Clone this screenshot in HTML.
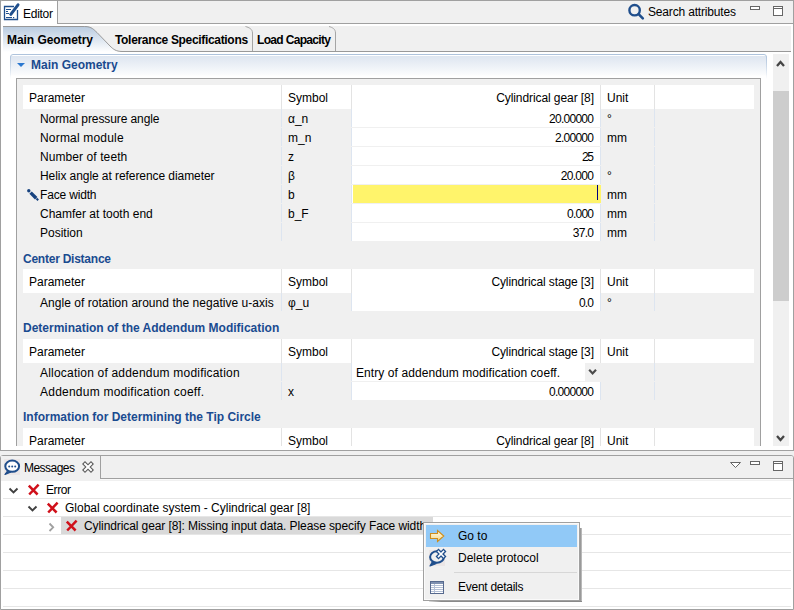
<!DOCTYPE html>
<html><head><meta charset="utf-8"><style>
html,body{margin:0;padding:0;width:794px;height:610px;overflow:hidden;background:#f0f0f0}
body>div,body>svg{position:absolute}
.t{font-family:"Liberation Sans",sans-serif;font-size:12px;line-height:14px;color:#000;white-space:nowrap}
</style></head><body>
<div style="left:0px;top:0px;width:794px;height:451px;background:#fff"></div>
<div style="left:57px;top:0px;width:737px;height:24px;background:#f0f0f0;border-top:1px solid #a0a0a0;border-bottom:1px solid #a0a0a0;box-sizing:border-box"></div>
<div style="left:0px;top:0px;width:58px;height:24px;background:#fff;border:1px solid #a0a0a0;border-bottom:none;box-sizing:border-box;border-top-left-radius:2px"></div>
<div style="left:0px;top:0px;width:1px;height:451px;background:#a0a0a0"></div>
<div style="left:793px;top:0px;width:1px;height:451px;background:#a0a0a0"></div>
<div style="left:0px;top:450px;width:794px;height:1px;background:#a0a0a0"></div>
<div class="t" style="left:23px;top:7px;;letter-spacing:-0.269px">Editor</div>
<div class="t" style="left:648px;top:5px;;letter-spacing:-0.168px">Search attributes</div>
<svg style="left:0px;top:0px" width="794" height="24" viewBox="0 0 794 24"><g fill="none" stroke="#1f4e8c" stroke-width="1.3"><path d="M14,6.5 L4.5,6.5 L4.5,19.5 L17.5,19.5 L17.5,10"/></g>
<g stroke="#1f4e8c" stroke-width="1.2"><path d="M6,9.5 H11 M6,11.5 H8 M6,13.5 H9 M6,17.5 H12"/></g>
<rect x="13" y="17" width="1.2" height="1.2" fill="#1f4e8c"/>
<path d="M18,4.8 L10.8,14.3" stroke="#1f4e8c" stroke-width="3" stroke-linecap="round"/>
<circle cx="634.6" cy="10.2" r="5.2" fill="none" stroke="#1f4e8c" stroke-width="2.4"/>
<path d="M638.6,14.2 L642.8,18.4" stroke="#1f4e8c" stroke-width="2.6" stroke-linecap="round"/>
<rect x="750.5" y="6.5" width="9" height="3" fill="#fff" stroke="#666" stroke-width="1"/>
<rect x="773.5" y="6.5" width="9" height="9" fill="#fff" stroke="#666" stroke-width="1"/>
<path d="M773.5,8.5 H782.5" stroke="#666" stroke-width="1"/></svg>
<div style="left:3px;top:26px;width:788px;height:25px;background:#f0f0f0"></div>
<svg style="left:0px;top:20px" width="794" height="40" viewBox="0 20 794 40"><defs><linearGradient id="tg" x1="0" y1="0" x2="0" y2="1"><stop offset="0" stop-color="#b7cadf"/><stop offset="1" stop-color="#ffffff"/></linearGradient></defs>
<path d="M3,26 L84.5,26 C92,26 94,30 97,32.5 L110,46 C113,49 116,52 122,52 L3,52 Z" fill="url(#tg)"/>
<path d="M3,26.5 L84.5,26.5 C92,26.5 94,30 97,32.5 L110,46 C113,49 116,51.5 122,51.5 L791,51.5" fill="none" stroke="#999" stroke-width="1"/>
<path d="M245.5,26.5 C249,27.5 252.5,29 252.5,33 L252.5,51" fill="none" stroke="#a5a5a5" stroke-width="1"/>
<path d="M329,26.5 C332.5,27.5 335.5,29 335.5,33 L335.5,51" fill="none" stroke="#a5a5a5" stroke-width="1"/></svg>
<div class="t" style="left:7px;top:33px;font-weight:bold;letter-spacing:-0.056px">Main Geometry</div>
<div class="t" style="left:115px;top:33px;font-weight:bold;letter-spacing:-0.323px">Tolerance Specifications</div>
<div class="t" style="left:257px;top:33px;font-weight:bold;letter-spacing:-0.667px">Load Capacity</div>
<div style="left:10px;top:54px;width:757px;height:25px;background:linear-gradient(#fff 0,#fff 2px,#dde5f0 2px,#fbfcfd 21px,#fff 22px);border-radius:3px 3px 0 0"></div>
<svg style="left:0px;top:50px" width="794" height="32" viewBox="0 50 794 32"><defs><linearGradient id="sg" x1="0" y1="0" x2="0" y2="1"><stop offset="0" stop-color="#aec3dc"/><stop offset="1" stop-color="#aec3dc" stop-opacity="0"/></linearGradient></defs>
<path d="M10.5,79 L10.5,57 Q10.5,54.5 13,54.5 L764,54.5 Q766.5,54.5 766.5,57 L766.5,79" fill="none" stroke="url(#sg)" stroke-width="1"/>
<path d="M17,63 L25,63 L21,67 Z" fill="#2b78d0"/></svg>
<div class="t" style="left:31px;top:58px;font-weight:bold;color:#1a4a8e">Main Geometry</div>
<div style="left:16px;top:78px;width:745px;height:368px;background:#f0f0f0;border:1px solid #a0a0a0;border-bottom:none;box-sizing:border-box"></div>
<div style="left:773px;top:54px;width:16px;height:392px;background:#f0f0f0"></div>
<div style="left:773px;top:91px;width:16px;height:210px;background:#cdcdcd"></div>
<svg style="left:770px;top:50px" width="24" height="400" viewBox="770 50 24 400"><path d="M777,66 L780.5,62 L784,66" fill="none" stroke="#454545" stroke-width="2.3"/>
<path d="M777,436 L780.5,440 L784,436" fill="none" stroke="#454545" stroke-width="2.3"/></svg>
<div style="left:23px;top:85px;width:731px;height:24px;background:#fff"></div>
<div style="left:281px;top:85px;width:1px;height:24px;background:#e3e3e3"></div>
<div style="left:351px;top:85px;width:1px;height:24px;background:#e3e3e3"></div>
<div style="left:600px;top:85px;width:1px;height:24px;background:#e3e3e3"></div>
<div style="left:654px;top:85px;width:1px;height:24px;background:#e3e3e3"></div>
<div class="t" style="left:29px;top:91px;">Parameter</div>
<div class="t" style="left:288px;top:91px;">Symbol</div>
<div class="t" style="left:193.91710526315785px;width:400px;text-align:right;top:91px;;letter-spacing:-0.083px">Cylindrical gear [8]</div>
<div class="t" style="left:607px;top:91px;">Unit</div>
<div style="left:352px;top:109px;width:248px;height:18px;background:#fff"></div>
<div style="left:281px;top:109px;width:1px;height:18px;background:#dde5f0"></div>
<div style="left:351px;top:109px;width:1px;height:18px;background:#dde5f0"></div>
<div style="left:600px;top:109px;width:1px;height:18px;background:#dde5f0"></div>
<div style="left:654px;top:109px;width:1px;height:18px;background:#dde5f0"></div>
<div class="t" style="left:40px;top:112px;;letter-spacing:-0.095px">Normal pressure angle</div>
<div class="t" style="left:288px;top:112px;">α_n</div>
<div class="t" style="left:193.28125px;width:400px;text-align:right;top:112px;;letter-spacing:-0.719px">20.00000</div>
<div class="t" style="left:607px;top:112px;">°</div>
<div style="left:352px;top:128px;width:248px;height:18px;background:#fff"></div>
<div style="left:281px;top:128px;width:1px;height:18px;background:#dde5f0"></div>
<div style="left:351px;top:128px;width:1px;height:18px;background:#dde5f0"></div>
<div style="left:600px;top:128px;width:1px;height:18px;background:#dde5f0"></div>
<div style="left:654px;top:128px;width:1px;height:18px;background:#dde5f0"></div>
<div class="t" style="left:40px;top:131px;;letter-spacing:0.185px">Normal module</div>
<div class="t" style="left:288px;top:131px;">m_n</div>
<div class="t" style="left:193.2734375px;width:400px;text-align:right;top:131px;;letter-spacing:-0.727px">2.00000</div>
<div class="t" style="left:607px;top:131px;">mm</div>
<div style="left:352px;top:147px;width:248px;height:18px;background:#fff"></div>
<div style="left:281px;top:147px;width:1px;height:18px;background:#dde5f0"></div>
<div style="left:351px;top:147px;width:1px;height:18px;background:#dde5f0"></div>
<div style="left:600px;top:147px;width:1px;height:18px;background:#dde5f0"></div>
<div style="left:654px;top:147px;width:1px;height:18px;background:#dde5f0"></div>
<div class="t" style="left:40px;top:150px;;letter-spacing:0.085px">Number of teeth</div>
<div class="t" style="left:288px;top:150px;">z</div>
<div class="t" style="left:192.65625px;width:400px;text-align:right;top:150px;;letter-spacing:-1.344px">25</div>
<div style="left:352px;top:166px;width:248px;height:18px;background:#fff"></div>
<div style="left:281px;top:166px;width:1px;height:18px;background:#dde5f0"></div>
<div style="left:351px;top:166px;width:1px;height:18px;background:#dde5f0"></div>
<div style="left:600px;top:166px;width:1px;height:18px;background:#dde5f0"></div>
<div style="left:654px;top:166px;width:1px;height:18px;background:#dde5f0"></div>
<div class="t" style="left:40px;top:169px;;letter-spacing:-0.070px">Helix angle at reference diameter</div>
<div class="t" style="left:288px;top:169px;">β</div>
<div class="t" style="left:193.3225px;width:400px;text-align:right;top:169px;;letter-spacing:-0.678px">20.000</div>
<div class="t" style="left:607px;top:169px;">°</div>
<div style="left:352px;top:185px;width:248px;height:18px;background:#fff"></div>
<div style="left:281px;top:185px;width:1px;height:18px;background:#dde5f0"></div>
<div style="left:351px;top:185px;width:1px;height:18px;background:#dde5f0"></div>
<div style="left:600px;top:185px;width:1px;height:18px;background:#dde5f0"></div>
<div style="left:654px;top:185px;width:1px;height:18px;background:#dde5f0"></div>
<div class="t" style="left:40px;top:188px;;letter-spacing:-0.168px">Face width</div>
<div class="t" style="left:288px;top:188px;">b</div>
<div class="t" style="left:607px;top:188px;">mm</div>
<div style="left:352px;top:204px;width:248px;height:18px;background:#fff"></div>
<div style="left:281px;top:204px;width:1px;height:18px;background:#dde5f0"></div>
<div style="left:351px;top:204px;width:1px;height:18px;background:#dde5f0"></div>
<div style="left:600px;top:204px;width:1px;height:18px;background:#dde5f0"></div>
<div style="left:654px;top:204px;width:1px;height:18px;background:#dde5f0"></div>
<div class="t" style="left:40px;top:207px;">Chamfer at tooth end</div>
<div class="t" style="left:288px;top:207px;">b_F</div>
<div class="t" style="left:193.24609375px;width:400px;text-align:right;top:207px;;letter-spacing:-0.754px">0.000</div>
<div class="t" style="left:607px;top:207px;">mm</div>
<div style="left:352px;top:223px;width:248px;height:18px;background:#fff"></div>
<div style="left:281px;top:223px;width:1px;height:18px;background:#dde5f0"></div>
<div style="left:351px;top:223px;width:1px;height:18px;background:#dde5f0"></div>
<div style="left:600px;top:223px;width:1px;height:18px;background:#dde5f0"></div>
<div style="left:654px;top:223px;width:1px;height:18px;background:#dde5f0"></div>
<div class="t" style="left:40px;top:226px;">Position</div>
<div class="t" style="left:193.28541666666672px;width:400px;text-align:right;top:226px;;letter-spacing:-0.715px">37.0</div>
<div class="t" style="left:607px;top:226px;">mm</div>
<div style="left:353px;top:185px;width:248px;height:18px;background:#fff46b"></div>
<div style="left:597px;top:185px;width:1px;height:15px;background:#000080"></div>
<svg style="left:20px;top:180px" width="30" height="30" viewBox="20 180 30 30"><circle cx="28.8" cy="190.8" r="1.7" fill="#17427f"/>
<path d="M30.6,192.6 L36.2,198.2" stroke="#17427f" stroke-width="3.4" stroke-linecap="butt"/>
<path d="M36.5,198.5 L38.2,200.2" stroke="#17427f" stroke-width="2"/></svg>
<div class="t" style="left:23px;top:252px;font-weight:bold;color:#1a4b90;letter-spacing:-0.240px">Center Distance</div>
<div style="left:23px;top:269px;width:731px;height:24px;background:#fff"></div>
<div style="left:281px;top:269px;width:1px;height:24px;background:#e3e3e3"></div>
<div style="left:351px;top:269px;width:1px;height:24px;background:#e3e3e3"></div>
<div style="left:600px;top:269px;width:1px;height:24px;background:#e3e3e3"></div>
<div style="left:654px;top:269px;width:1px;height:24px;background:#e3e3e3"></div>
<div class="t" style="left:29px;top:275px;">Parameter</div>
<div class="t" style="left:288px;top:275px;">Symbol</div>
<div class="t" style="left:193.89484374999995px;width:400px;text-align:right;top:275px;;letter-spacing:-0.105px">Cylindrical stage [3]</div>
<div class="t" style="left:607px;top:275px;">Unit</div>
<div style="left:352px;top:293px;width:248px;height:18px;background:#fff"></div>
<div style="left:281px;top:293px;width:1px;height:18px;background:#dde5f0"></div>
<div style="left:351px;top:293px;width:1px;height:18px;background:#dde5f0"></div>
<div style="left:600px;top:293px;width:1px;height:18px;background:#dde5f0"></div>
<div style="left:654px;top:293px;width:1px;height:18px;background:#dde5f0"></div>
<div class="t" style="left:40px;top:296px;;letter-spacing:0.038px">Angle of rotation around the negative u-axis</div>
<div class="t" style="left:288px;top:296px;">φ_u</div>
<div class="t" style="left:193.1640625px;width:400px;text-align:right;top:296px;;letter-spacing:-0.836px">0.0</div>
<div class="t" style="left:607px;top:296px;">°</div>
<div class="t" style="left:23px;top:321px;font-weight:bold;color:#1a4b90">Determination of the Addendum Modification</div>
<div style="left:23px;top:339px;width:731px;height:24px;background:#fff"></div>
<div style="left:281px;top:339px;width:1px;height:24px;background:#e3e3e3"></div>
<div style="left:351px;top:339px;width:1px;height:24px;background:#e3e3e3"></div>
<div style="left:600px;top:339px;width:1px;height:24px;background:#e3e3e3"></div>
<div style="left:654px;top:339px;width:1px;height:24px;background:#e3e3e3"></div>
<div class="t" style="left:29px;top:345px;">Parameter</div>
<div class="t" style="left:288px;top:345px;">Symbol</div>
<div class="t" style="left:193.89484374999995px;width:400px;text-align:right;top:345px;;letter-spacing:-0.105px">Cylindrical stage [3]</div>
<div class="t" style="left:607px;top:345px;">Unit</div>
<div style="left:281px;top:363px;width:1px;height:18px;background:#dde5f0"></div>
<div style="left:351px;top:363px;width:1px;height:18px;background:#dde5f0"></div>
<div style="left:600px;top:363px;width:1px;height:18px;background:#dde5f0"></div>
<div style="left:654px;top:363px;width:1px;height:18px;background:#dde5f0"></div>
<div class="t" style="left:40px;top:366px;;letter-spacing:0.199px">Allocation of addendum modification</div>
<div style="left:352px;top:363px;width:233px;height:18px;background:#fff"></div>
<div style="left:585px;top:363px;width:20px;height:18px;background:#f0f0f0"></div>
<svg style="left:580px;top:360px" width="24" height="24" viewBox="580 360 24 24"><path d="M589.2,369.8 L592.6,373.4 L596,369.8" fill="none" stroke="#4a4a4a" stroke-width="2.2"/></svg>
<div class="t" style="left:356px;top:366px;;letter-spacing:0.079px">Entry of addendum modification coeff.</div>
<div style="left:352px;top:382px;width:248px;height:18px;background:#fff"></div>
<div style="left:281px;top:382px;width:1px;height:18px;background:#dde5f0"></div>
<div style="left:351px;top:382px;width:1px;height:18px;background:#dde5f0"></div>
<div style="left:600px;top:382px;width:1px;height:18px;background:#dde5f0"></div>
<div style="left:654px;top:382px;width:1px;height:18px;background:#dde5f0"></div>
<div class="t" style="left:40px;top:385px;;letter-spacing:0.229px">Addendum modification coeff.</div>
<div class="t" style="left:288px;top:385px;">x</div>
<div class="t" style="left:193.28125px;width:400px;text-align:right;top:385px;;letter-spacing:-0.719px">0.000000</div>
<div class="t" style="left:23px;top:410px;font-weight:bold;color:#1a4b90">Information for Determining the Tip Circle</div>
<div style="left:23px;top:428px;width:731px;height:18px;background:#fff"></div>
<div style="left:281px;top:428px;width:1px;height:18px;background:#e3e3e3"></div>
<div style="left:351px;top:428px;width:1px;height:18px;background:#e3e3e3"></div>
<div style="left:600px;top:428px;width:1px;height:18px;background:#e3e3e3"></div>
<div style="left:654px;top:428px;width:1px;height:18px;background:#e3e3e3"></div>
<div class="t" style="left:29px;top:434px;">Parameter</div>
<div class="t" style="left:288px;top:434px;">Symbol</div>
<div class="t" style="left:193.91710526315785px;width:400px;text-align:right;top:434px;;letter-spacing:-0.083px">Cylindrical gear [8]</div>
<div class="t" style="left:607px;top:434px;">Unit</div>
<div style="left:0px;top:455px;width:794px;height:155px;background:#fff;border:1px solid #a0a0a0;box-sizing:border-box;border-radius:3px 3px 0 0"></div>
<div style="left:1px;top:456px;width:792px;height:23px;background:#f0f0f0;border-bottom:1px solid #a0a0a0;box-sizing:border-box;border-radius:2px 2px 0 0"></div>
<div style="left:1px;top:479px;width:792px;height:1px;background:#f9f9f9"></div>
<div style="left:1px;top:480px;width:792px;height:1px;background:#f0f0f0"></div>
<div style="left:1px;top:456px;width:100px;height:23px;background:#f0f0f0;border-right:1px solid #a0a0a0;box-sizing:border-box"></div>
<div style="left:1px;top:478px;width:99px;height:3px;background:#f0f0f0"></div>
<div class="t" style="left:24px;top:461px;;letter-spacing:-0.527px">Messages</div>
<svg style="left:0px;top:455px" width="794" height="25" viewBox="0 455 794 25"><rect x="4" y="459" width="16" height="16" fill="#ebe6e6"/>
<path d="M7.5,471 L5,474.5 L11,472" fill="#1f4e8c" stroke="#1f4e8c" stroke-width="1.2" stroke-linejoin="round"/>
<ellipse cx="12.2" cy="466.2" rx="6.9" ry="5.6" fill="#fff" stroke="#1f4e8c" stroke-width="2"/>
<circle cx="9.2" cy="466.5" r="1" fill="#1f4e8c"/><circle cx="12.2" cy="466.5" r="1" fill="#1f4e8c"/><circle cx="15.2" cy="466.5" r="1" fill="#1f4e8c"/>
<path d="M85,464 L91,470 M91,464 L85,470" stroke="#5a5a5a" stroke-width="4.2" stroke-linecap="square"/>
<path d="M85,464 L91,470 M91,464 L85,470" stroke="#fff" stroke-width="2" stroke-linecap="square"/>
<path d="M730.5,462.5 L740.5,462.5 L735.5,467.5 Z" fill="#fff" stroke="#666" stroke-width="1"/>
<rect x="750.5" y="461.5" width="9" height="3" fill="#fff" stroke="#666" stroke-width="1"/>
<rect x="773.5" y="461.5" width="9" height="9" fill="#fff" stroke="#666" stroke-width="1"/>
<path d="M773.5,463.5 H782.5" stroke="#666" stroke-width="1"/></svg>
<div style="left:3px;top:498px;width:788px;height:1px;background:#e6e6e6"></div>
<div style="left:3px;top:516px;width:788px;height:1px;background:#e6e6e6"></div>
<div style="left:3px;top:534px;width:788px;height:1px;background:#e6e6e6"></div>
<div style="left:3px;top:552px;width:788px;height:1px;background:#e6e6e6"></div>
<div style="left:3px;top:570px;width:788px;height:1px;background:#e6e6e6"></div>
<div style="left:3px;top:588px;width:788px;height:1px;background:#e6e6e6"></div>
<div style="left:3px;top:606px;width:788px;height:1px;background:#e6e6e6"></div>
<div style="left:61px;top:517px;width:372px;height:17px;background:#d9d9d9"></div>
<div class="t" style="left:46px;top:483px;;letter-spacing:-0.418px">Error</div>
<div class="t" style="left:65px;top:501px;">Global coordinate system - Cylindrical gear [8]</div>
<div class="t" style="left:84px;top:519px;;letter-spacing:-0.092px">Cylindrical gear [8]: Missing input data. Please specify Face width</div>
<svg style="left:0px;top:480px" width="120" height="60" viewBox="0 480 120 60"><path d="M9.5,488.5 L13.5,492.5 L17.5,488.5" fill="none" stroke="#404040" stroke-width="1.9"/>
<path d="M28.5,506.5 L32.5,510.5 L36.5,506.5" fill="none" stroke="#404040" stroke-width="1.9"/>
<path d="M49.5,523.5 L53.2,527.3 L49.5,531" fill="none" stroke="#a0a0a0" stroke-width="1.8"/>
<path d="M28.8,485.7 L37.6,494.5 M38.6,484.7 L29.2,494.5" stroke="#d0101a" stroke-width="2.5"/><path d="M47.8,503.7 L56.6,512.5 M57.6,502.7 L48.2,512.5" stroke="#d0101a" stroke-width="2.5"/><path d="M66.8,521.7 L75.6,530.5 M76.6,520.7 L67.2,530.5" stroke="#d0101a" stroke-width="2.5"/></svg>
<div style="left:580px;top:528px;width:2px;height:74px;background:linear-gradient(90deg,#8a8a8a,#c8c8c8)"></div>
<div style="left:429px;top:601px;width:153px;height:1px;background:linear-gradient(90deg,#e0e0e0,#8a8a8a 8%,#8a8a8a)"></div>
<div style="left:423px;top:522px;width:157px;height:79px;background:#f0f0f0;border:1px solid #a0a0a0;box-sizing:border-box;box-shadow:inset 1px 1px 0 #fafafa,inset -1px -1px 0 #fafafa"></div>
<div style="left:426px;top:525px;width:151px;height:22px;background:#91c9f7"></div>
<div class="t" style="left:458px;top:529px;">Go to</div>
<div class="t" style="left:458px;top:551px;">Delete protocol</div>
<div style="left:454px;top:572px;width:123px;height:1px;background:#d7d7d7"></div>
<div class="t" style="left:458px;top:580px;;letter-spacing:-0.266px">Event details</div>
<svg style="left:420px;top:520px" width="40" height="80" viewBox="420 520 40 80"><defs><linearGradient id="ag" x1="0" y1="0" x2="0" y2="1"><stop offset="0" stop-color="#fffbe6"/><stop offset="1" stop-color="#f6d98a"/></linearGradient></defs>
<path d="M430.5,533.5 L437.5,533.5 L437.5,530.5 L443.8,536 L437.5,541.5 L437.5,538.5 L430.5,538.5 Z" fill="url(#ag)" stroke="#cf8d1a" stroke-width="1.1"/>
<rect x="429" y="550" width="16" height="16" fill="#ebe6e6"/>
<path d="M432.5,561.5 L430,566 L436.5,563.5" fill="#1f4e8c" stroke="#1f4e8c" stroke-width="1.2" stroke-linejoin="round"/>
<ellipse cx="437" cy="557" rx="6.9" ry="5.8" fill="#f0f0f0" stroke="#1f4e8c" stroke-width="2"/>
<path d="M438.5,551.5 L443.5,556.5 M443.5,551.5 L438.5,556.5" stroke="#1f4e8c" stroke-width="4.2" stroke-linecap="square"/>
<path d="M438.5,551.5 L443.5,556.5 M443.5,551.5 L438.5,556.5" stroke="#fff" stroke-width="1.6" stroke-linecap="square"/>
<rect x="430.5" y="581.5" width="13" height="12" fill="#fff" stroke="#56698e" stroke-width="1"/>
<rect x="431" y="582" width="12" height="2" fill="#7e90b0"/>
<path d="M431,585.5 H443 M431,587.5 H443 M431,589.5 H443 M431,591.5 H443 M434.5,584 V593" stroke="#b4c0d6" stroke-width="1"/></svg>
</body></html>
